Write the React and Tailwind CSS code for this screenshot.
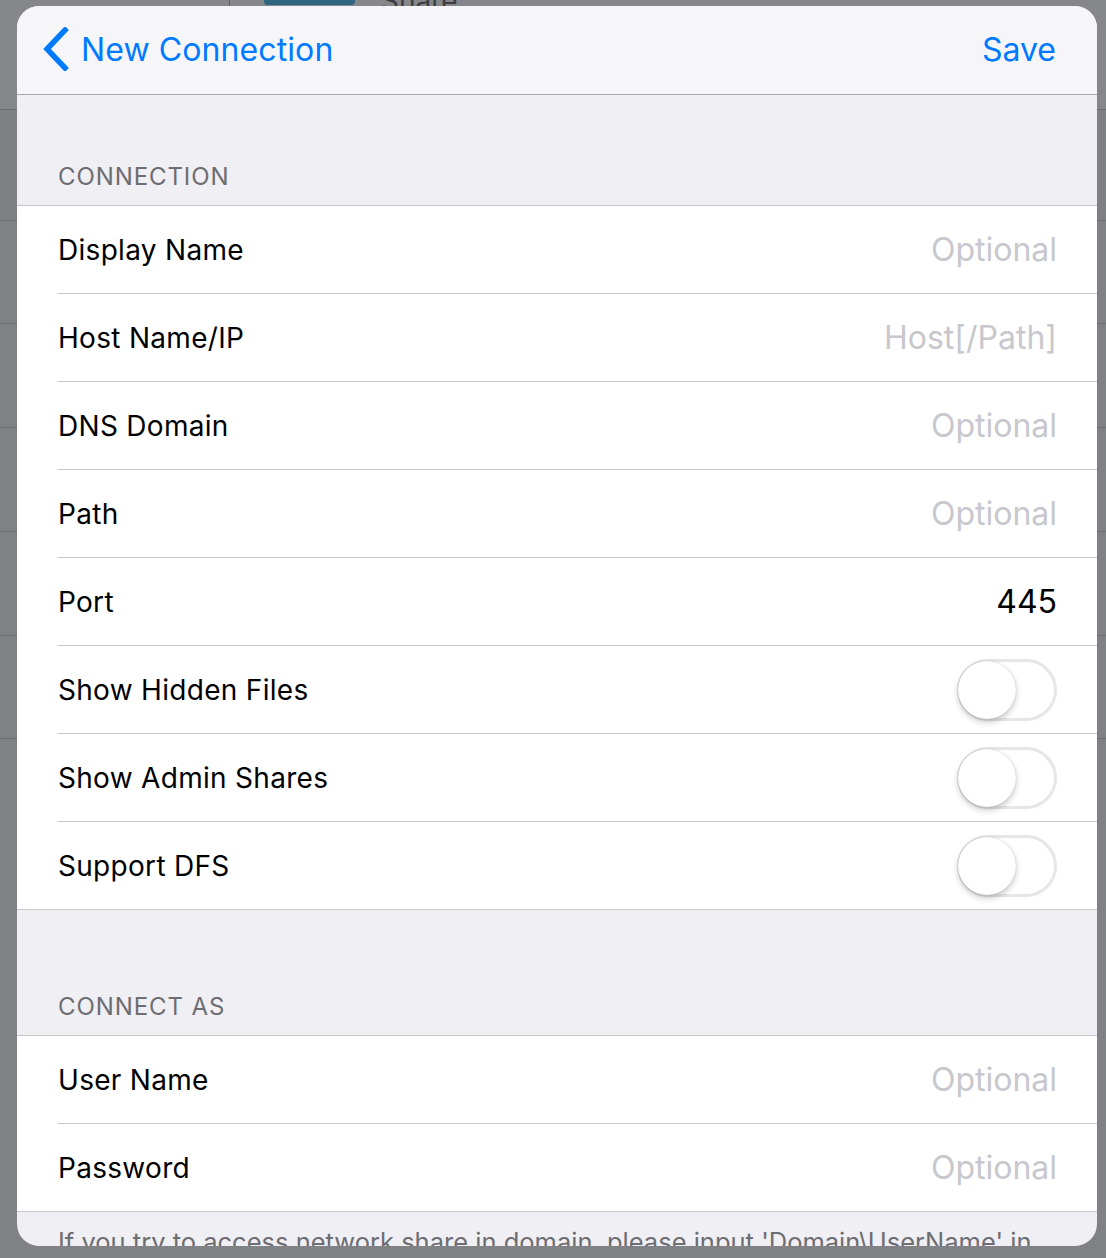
import React from "react";

const font = { fontFamily: "Inter, 'Noto Sans', sans-serif" };

const connectionRows = [
  { label: "Display Name", placeholder: "Optional" },
  { label: "Host Name/IP", placeholder: "Host[/Path]" },
  { label: "DNS Domain", placeholder: "Optional" },
  { label: "Path", placeholder: "Optional" },
  { label: "Port", value: "445" },
  { label: "Show Hidden Files", toggle: true },
  { label: "Show Admin Shares", toggle: true },
  { label: "Support DFS", toggle: true },
];

const connectAsRows = [
  { label: "User Name", placeholder: "Optional" },
  { label: "Password", placeholder: "Optional" },
];

function Toggle() {
  return (
    <div className="w-[100px] h-[62px] rounded-full border-[3px] border-[#e6e6ea] bg-white flex items-center">
      <div className="w-[58px] h-[58px] -ml-[2px] rounded-full bg-white shadow-[0_3px_6px_rgba(0,0,0,0.22),0_0_1px_rgba(0,0,0,0.25)]" />
    </div>
  );
}

function Row({ row, last }) {
  return (
    <div className={"flex bg-white " + (last ? "h-[87px]" : "h-[88px]")}>
      <div
        className={
          "flex-1 ml-[41px] pr-[40px] flex items-center justify-between " +
          (last ? "" : "border-b border-[#c8c7cc]")
        }
      >
        <span className="text-[28px] text-black tracking-[0.3px]">{row.label}</span>
        {row.toggle ? (
          <Toggle />
        ) : row.value ? (
          <span className="text-[32px] text-black">{row.value}</span>
        ) : (
          <span className="text-[32px] text-[#c7c7cd]">{row.placeholder}</span>
        )}
      </div>
    </div>
  );
}

function Section({ title, rows, height }) {
  return (
    <div>
      <div className={"flex items-end pl-[41px] pb-[10px] border-b border-[#c8c7cc] " + height}>
        <span className="text-[24px] text-[#6d6d72] tracking-[0.9px]">{title}</span>
      </div>
      <div className="border-b border-[#c8c7cc]">
        {rows.map((r, i) => (
          <Row key={r.label} row={r} last={i === rows.length - 1} />
        ))}
      </div>
    </div>
  );
}

export default function App() {
  return (
    <div className="relative w-[1106px] h-[1258px] overflow-hidden bg-[#808185]" style={font}>
      {/* dimmed page behind the sheet */}
      <div className="flex flex-col">
        <div className="h-[110px] bg-[#86878a] border-b border-[#6c6d70] flex">
          <div className="w-[230px] border-r border-[#5f6064]" />
          <div className="ml-[34px] w-[91px] h-[5px] rounded-b bg-[#2e6680]" />
          <span className="ml-[26px] -mt-[20px] text-[28px] text-[#3d3e41]">Share</span>
        </div>
        <div className="h-[111px] bg-[#7f8083] border-b border-[#6c6d70]" />
        <div className="h-[103px] border-b border-[#6c6d70]" />
        <div className="h-[104px] border-b border-[#6c6d70]" />
        <div className="h-[104px] border-b border-[#6c6d70]" />
        <div className="h-[104px] border-b border-[#6c6d70]" />
        <div className="h-[103px] border-b border-[#6c6d70]" />
        <div className="flex-1 bg-[#7b7c80]" />
      </div>

      {/* modal sheet */}
      <div className="absolute left-[17px] top-[6px] w-[1080px] h-[1240px] rounded-[22px] overflow-hidden bg-[#efeff4] flex flex-col">
        <div className="h-[89px] shrink-0 bg-[#f6f6f8] border-b border-[#a9a9ac] flex items-center justify-between pl-[24px] pr-[41px]">
          <div className="flex items-center gap-[12px] text-[#007aff]">
            <svg width="28" height="44" viewBox="0 0 28 44" className="-mt-[2px]">
              <path d="M24 3 L6 22 L24 41" fill="none" stroke="#007aff" strokeWidth="5.5" strokeLinecap="square" />
            </svg>
            <span className="text-[32px] tracking-[0.1px]">New Connection</span>
          </div>
          <span className="text-[32px] text-[#007aff]">Save</span>
        </div>

        <Section title="CONNECTION" rows={connectionRows} height="h-[111px]" />
        <Section title="CONNECT AS" rows={connectAsRows} height="h-[126px]" />

        <div className="pl-[41px] pr-[20px] pt-[14px]">
          <p className="text-[25.5px] text-[#6d6d72] leading-[32px] whitespace-nowrap">
            If you try to access network share in domain, please input 'Domain\UserName' in
          </p>
        </div>
      </div>
    </div>
  );
}
